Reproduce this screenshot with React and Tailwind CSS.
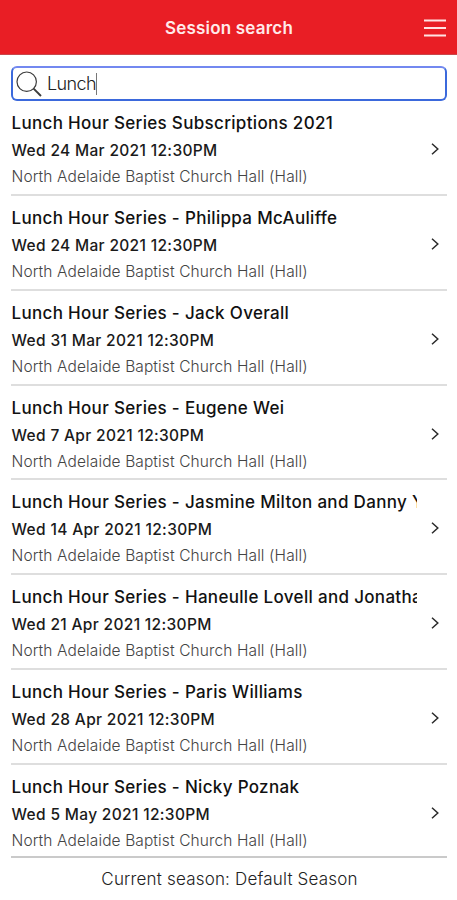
import React, { useState } from 'react';

const sessions = [
  { title: 'Lunch Hour Series Subscriptions 2021', date: 'Wed 24 Mar 2021 12:30PM' },
  { title: 'Lunch Hour Series - Philippa McAuliffe', date: 'Wed 24 Mar 2021 12:30PM' },
  { title: 'Lunch Hour Series - Jack Overall', date: 'Wed 31 Mar 2021 12:30PM' },
  { title: 'Lunch Hour Series - Eugene Wei', date: 'Wed 7 Apr 2021 12:30PM' },
  { title: 'Lunch Hour Series - Jasmine Milton and Danny Y', date: 'Wed 14 Apr 2021 12:30PM' },
  { title: 'Lunch Hour Series - Haneulle Lovell and Jonatha', date: 'Wed 21 Apr 2021 12:30PM' },
  { title: 'Lunch Hour Series - Paris Williams', date: 'Wed 28 Apr 2021 12:30PM' },
  { title: 'Lunch Hour Series - Nicky Poznak', date: 'Wed 5 May 2021 12:30PM' },
];

const SearchIcon = () => (
  <svg className="w-[26px] h-[26px] shrink-0" viewBox="0 0 26 26" fill="none" stroke="#3c3c3c">
    <circle cx="10.7" cy="10.7" r="9.7" strokeWidth="1.2" />
    <path d="M17.6 17.6L25 25" strokeWidth="1.9" />
  </svg>
);

const Chevron = () => (
  <svg className="w-2 h-3 mr-2 shrink-0" viewBox="0 0 8 12" fill="none" stroke="#2b2b2b" strokeWidth="1.5">
    <path d="M1 0.8L6.8 6L1 11.2" />
  </svg>
);

const Header = () => (
  <header className="grid grid-cols-[1fr_auto_1fr] items-center h-[55px] px-[11px] bg-[#e91e25] border-b border-[#c9464a] text-white">
    <h1 className="col-start-2 pt-[3px] pl-px text-[17px] font-semibold tracking-[0.2px] text-[#ffeaea]">Session search</h1>
    <button aria-label="Menu" className="justify-self-end pt-px">
      <svg className="block w-[22px] h-[18px]" viewBox="0 0 22 18" stroke="#ffe3e3" strokeWidth="2">
        <path d="M0 1.5H22M0 9H22M0 16.5H22" />
      </svg>
    </button>
  </header>
);

const SessionRow = ({ session }) => (
  <li className="flex items-start h-[94.85px] last:h-[93px] pt-2 border-b-2 border-[#dedede] last:border-[#cacaca]">
    <div className="w-[406px] pl-[0.5px] shrink-0 overflow-hidden whitespace-nowrap">
      <h2 className="h-[28px] leading-[28px] text-[17px] font-medium tracking-[0.32px] text-[#111]">{session.title}</h2>
      <p className="h-[26px] leading-[27px] text-[15.5px] font-medium tracking-[0.33px] text-[#1a1a1a]">{session.date}</p>
      <p className="h-[27px] leading-[27px] text-[15.5px] font-light tracking-[0.11px] text-[#444]">
        North Adelaide Baptist Church Hall (Hall)
      </p>
    </div>
    <div className="flex grow items-center justify-end h-20">
      <Chevron />
    </div>
  </li>
);

const App = () => {
  const [query] = useState('Lunch');

  return (
    <div className="flex flex-col w-full h-[900px] overflow-hidden bg-white font-['Inter',sans-serif]">
      <Header />
      <main className="pl-[11px] pr-[10px] pt-[11px]">
        <div className="flex items-center h-[35px] pl-[3px] border-2 border-[#3b69dc] border-t-[#7388f0] rounded-md">
          <SearchIcon />
          <span className="ml-[5px] text-lg font-light tracking-[-0.6px] text-[#222]">{query}</span>
          <span className="w-px h-[22px] bg-[#777]" />
        </div>
        <ul>
          {sessions.map((session) => (
            <SessionRow key={session.title} session={session} />
          ))}
        </ul>
      </main>
      <footer className="pt-2 pl-0.5 text-center text-[17px] leading-[26px] font-light tracking-[0.18px] text-[#222]">
        Current season: Default Season
      </footer>
    </div>
  );
};

export default App;
